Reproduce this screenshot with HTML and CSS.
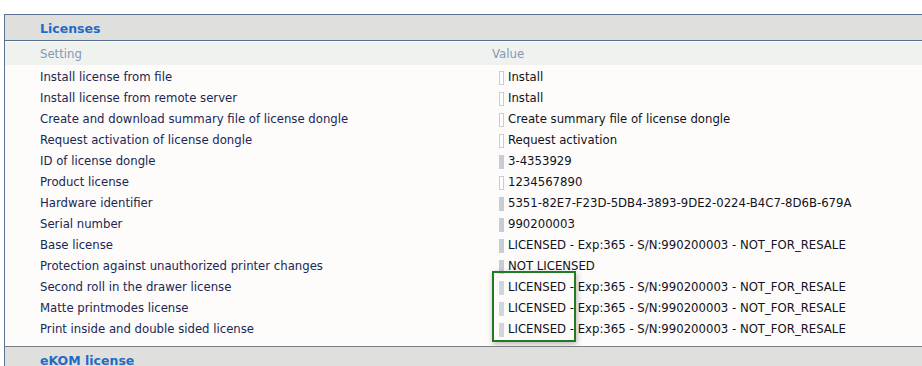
FILE: index.html
```html
<!DOCTYPE html>
<html>
<head>
<meta charset="utf-8">
<link rel="stylesheet" href="styles.css">
</head>
<body>
<div class="page">
  <section class="panel">
    <div class="panel-head">Licenses</div>
    <div class="grid">
      <div class="colhead">Setting</div>
      <div class="colhead value-head">Value</div>

      <div class="label">Install license from file</div>
      <div class="value"><span class="mark empty"></span>Install</div>

      <div class="label">Install license from remote server</div>
      <div class="value"><span class="mark empty"></span>Install</div>

      <div class="label">Create and download summary file of license dongle</div>
      <div class="value"><span class="mark empty"></span>Create summary file of license dongle</div>

      <div class="label">Request activation of license dongle</div>
      <div class="value"><span class="mark empty"></span>Request activation</div>

      <div class="label">ID of license dongle</div>
      <div class="value"><span class="mark"></span>3-4353929</div>

      <div class="label">Product license</div>
      <div class="value"><span class="mark empty"></span>1234567890</div>

      <div class="label">Hardware identifier</div>
      <div class="value"><span class="mark"></span>5351-82E7-F23D-5DB4-3893-9DE2-0224-B4C7-8D6B-679A</div>

      <div class="label">Serial number</div>
      <div class="value"><span class="mark"></span>990200003</div>

      <div class="label">Base license</div>
      <div class="value"><span class="mark"></span>LICENSED - Exp:365 - S/N:990200003 - NOT_FOR_RESALE</div>

      <div class="label">Protection against unauthorized printer changes</div>
      <div class="value"><span class="mark"></span>NOT LICENSED</div>

      <div class="label">Second roll in the drawer license</div>
      <div class="value"><span class="mark light"></span>LICENSED - Exp:365 - S/N:990200003 - NOT_FOR_RESALE</div>

      <div class="label">Matte printmodes license</div>
      <div class="value"><span class="mark light"></span>LICENSED - Exp:365 - S/N:990200003 - NOT_FOR_RESALE</div>

      <div class="label">Print inside and double sided license</div>
      <div class="value"><span class="mark light"></span>LICENSED - Exp:365 - S/N:990200003 - NOT_FOR_RESALE</div>
    </div>
    <div class="highlight"></div>
  </section>
  <section class="panel next">
    <div class="panel-head">eKOM license</div>
  </section>
</div>
</body>
</html>
```
FILE: styles.css
```css
html, body {
  margin: 0;
  padding: 0;
  background: #ffffff;
}
body {
  font-family: "DejaVu Sans", Verdana, sans-serif;
  font-size: 11.7px;
  overflow: hidden;
}
.page {
  padding-top: 14px;
  padding-left: 4px;
}
.panel {
  position: relative;
  border-left: 1px solid #5b7391;
  border-top: 1px solid #5b7391;
  background: #fdfcfa;
}
.panel-head {
  height: 23px;
  line-height: 23px;
  padding-top: 2px;
  background: #dfdfde;
  padding-left: 35px;
  font-weight: bold;
  font-size: 12.5px;
  color: #1f6cc6;
  border-bottom: 1px solid #56708f;
}
.grid {
  display: grid;
  grid-template-columns: 487px 1fr;
  grid-template-rows: 25px;
  grid-auto-rows: 21px;
  padding-top: 1px;
  padding-bottom: 6px;
}
.grid > div {
  line-height: 21px;
  white-space: nowrap;
}
.colhead {
  background: #f0f2f0;
  color: #8298b6;
  padding-top: 2px;
  height: 23px;
  box-sizing: border-box;
  align-self: start;
}
.colhead:first-child {
  padding-left: 35px;
}
.label {
  padding-left: 35px;
  color: #1b2655;
}
.value {
  color: #121220;
  display: flex;
  align-items: center;
  padding-left: 7px;
}
.colhead.value-head {
  padding-left: 0;
  display: block;
}
.mark {
  width: 5px;
  height: 14px;
  background: #c6cdd7;
  margin-right: 4px;
  box-sizing: border-box;
  flex: none;
}
.mark.empty {
  background: #ffffff;
  border: 1px solid #c9cdd2;
}
.mark.light {
  background: #cfd6df;
}
.highlight {
  position: absolute;
  left: 487px;
  top: 256px;
  width: 80px;
  height: 67px;
  border: 2px solid #227b22;
  box-shadow: 1px 2px 6px rgba(0, 0, 0, 0.28);
  pointer-events: none;
}
.panel.next {
  border-top: 1px solid #7d7f83;
  background: #dfdfde;
}
.panel.next .panel-head {
  border-bottom: none;
}
```
